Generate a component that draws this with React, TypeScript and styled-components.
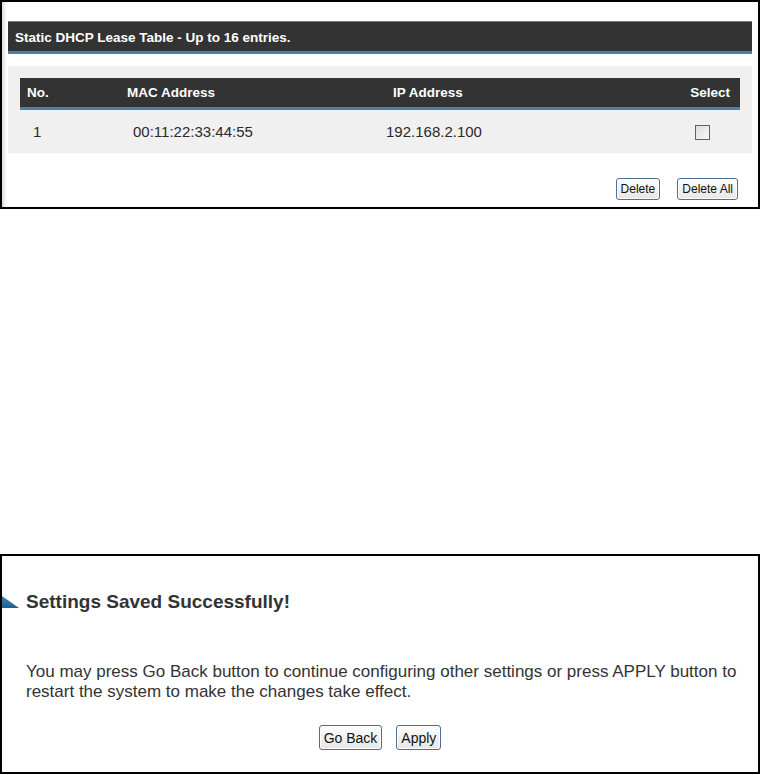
import styled, { createGlobalStyle } from 'styled-components';

const GlobalStyle = createGlobalStyle`
  body {
    margin: 0;
    background: #ffffff;
    font-family: 'Liberation Sans', Arial, sans-serif;
  }
`;

const Page = styled.div`
  display: flex;
  flex-direction: column;
  width: 761px;
`;

const Frame = styled.div<{ $height: number; $top?: number }>`
  box-sizing: border-box;
  width: 760px;
  height: ${p => p.$height}px;
  margin-top: ${p => p.$top || 0}px;
  border: 2px solid #000;
  background: #fff;
  display: flex;
  flex-direction: column;
`;

const TableFrame = styled(Frame)`
  padding: 19px 6px 0 6px;
  box-shadow: inset 5px 0 4px -3px #d4d4d4;
`;

const TitleBar = styled.div`
  height: 28px;
  border-top: 1px solid #7a7a7a;
  border-bottom: 3px solid #4c80a9;
  background: #333333;
  color: #ffffff;
  font-weight: bold;
  font-size: 13.5px;
  display: flex;
  align-items: center;
  padding-left: 7px;
  padding-top: 1px;
  box-sizing: content-box;
`;

const Panel = styled.div`
  margin-top: 12px;
  background: #f0f0f0;
  padding: 12px 12px 0 12px;
`;

const Grid = styled.div`
  display: grid;
  grid-template-columns: 100px 266px 1fr 59px;
  align-items: center;
`;

const HeadRow = styled(Grid)`
  height: 29px;
  background: #333333;
  border-bottom: 3px solid #4c80a9;
  color: #ffffff;
  font-weight: bold;
  font-size: 13.5px;
`;

const DataRow = styled(Grid)`
  height: 43px;
  color: #2a2a2a;
  font-size: 15px;
`;

const Cell = styled.div<{ $pad: number; $right?: boolean }>`
  padding-left: ${p => p.$pad}px;
  padding-right: ${p => (p.$right ? 10 : 0)}px;
  text-align: ${p => (p.$right ? 'right' : 'left')};
`;

const Check = styled.span`
  display: block;
  width: 13px;
  height: 13px;
  margin-left: 14px;
  margin-top: 1px;
  border: 1px solid #3f6a96;
  background: linear-gradient(135deg, #dcdcdc, #fafafa);
`;

const ButtonRow = styled.div<{ $center?: boolean }>`
  display: flex;
  justify-content: ${p => (p.$center ? 'center' : 'flex-end')};
  gap: ${p => (p.$center ? 14 : 17)}px;
  margin-top: ${p => (p.$center ? 23 : 25)}px;
  margin-right: ${p => (p.$center ? 0 : 14)}px;
`;

const Button = styled.button<{ $big?: boolean }>`
  box-sizing: border-box;
  height: ${p => (p.$big ? 25 : 22)}px;
  padding: 0 ${p => (p.$big ? 4 : 4)}px;
  font-family: 'Liberation Sans', Arial, sans-serif;
  font-size: ${p => (p.$big ? 14 : 12)}px;
  color: #111;
  border: 1px solid #4f6f92;
  border-radius: 3px;
  background: linear-gradient(#fdfdfd, #e6e6e6);
  box-shadow: inset 0 0 0 1px #ffffff;
  cursor: pointer;
`;

const MessageFrame = styled(Frame)`
  padding-top: 35px;
`;

const Heading = styled.div`
  display: flex;
  align-items: center;
  gap: 7px;
  height: 22px;
  font-size: 19px;
  font-weight: bold;
  color: #333333;
`;

const Message = styled.p`
  margin: 49px 0 0 0;
  padding: 0 18px 0 24px;
  font-size: 17px;
  line-height: 20px;
  color: #333333;
`;

function Marker() {
  return (
    <svg width="17" height="12" viewBox="0 0 17 12">
      <defs>
        <linearGradient id="mk" x1="0" y1="0" x2="0" y2="1">
          <stop offset="0" stopColor="#3f85b8" />
          <stop offset="1" stopColor="#1f5f8e" />
        </linearGradient>
      </defs>
      <polygon points="0,0 17,12 0,12" fill="url(#mk)" />
    </svg>
  );
}

export default function App() {
  return (
    <>
      <GlobalStyle />
      <Page>
        <TableFrame $height={209}>
          <TitleBar>Static DHCP Lease Table - Up to 16 entries.</TitleBar>
          <Panel>
            <HeadRow>
              <Cell $pad={7}>No.</Cell>
              <Cell $pad={7}>MAC Address</Cell>
              <Cell $pad={7}>IP Address</Cell>
              <Cell $pad={0} $right>Select</Cell>
            </HeadRow>
            <DataRow>
              <Cell $pad={13}>1</Cell>
              <Cell $pad={13}>00:11:22:33:44:55</Cell>
              <Cell $pad={0}>192.168.2.100</Cell>
              <Cell $pad={0}><Check /></Cell>
            </DataRow>
          </Panel>
          <ButtonRow>
            <Button>Delete</Button>
            <Button>Delete All</Button>
          </ButtonRow>
        </TableFrame>

        <MessageFrame $height={220} $top={345}>
          <Heading>
            <Marker />
            Settings Saved Successfully!
          </Heading>
          <Message>
            You may press Go Back button to continue configuring other settings or press APPLY button to
            restart the system to make the changes take effect.
          </Message>
          <ButtonRow $center>
            <Button $big>Go Back</Button>
            <Button $big>Apply</Button>
          </ButtonRow>
        </MessageFrame>
      </Page>
    </>
  );
}
